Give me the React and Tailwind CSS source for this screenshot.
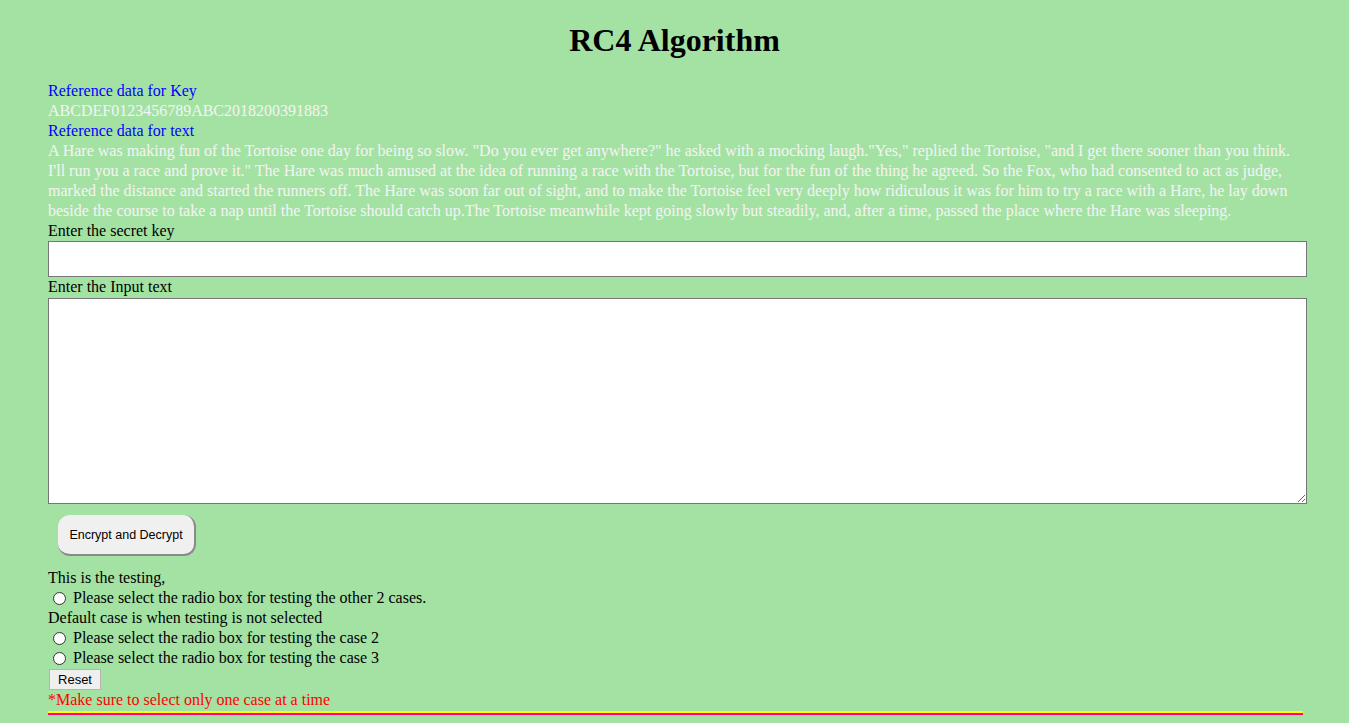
import React from 'react';

const story =
  'A Hare was making fun of the Tortoise one day for being so slow. "Do you ever get anywhere?" he asked with a mocking laugh."Yes," replied the Tortoise, "and I get there sooner than you think. I\'ll run you a race and prove it." The Hare was much amused at the idea of running a race with the Tortoise, but for the fun of the thing he agreed. So the Fox, who had consented to act as judge, marked the distance and started the runners off. The Hare was soon far out of sight, and to make the Tortoise feel very deeply how ridiculous it was for him to try a race with a Hare, he lay down beside the course to take a nap until the Tortoise should catch up.The Tortoise meanwhile kept going slowly but steadily, and, after a time, passed the place where the Hare was sleeping.';

const Radio = ({ label }) => (
  <label className="flex items-center h-[20px]">
    <input
      type="radio"
      className="appearance-none w-[13px] h-[13px] ml-[5px] mr-[7px] rounded-full border border-[#333] bg-white"
    />
    <span>{label}</span>
  </label>
);

const App = () => {
  return (
    <div className="min-h-[723px] bg-[#a4e2a4] font-['Liberation_Serif',serif] text-[16px] leading-[20px] text-black">
      <h1 className="pt-[22px] pb-[22px] text-center text-[32px] leading-[37px] font-bold">RC4 Algorithm</h1>

      <div className="pl-[48px] w-[1307px]">
        {/* Reference data */}
        <div className="text-[#0000ff]">Reference data for Key</div>
        <div className="text-[#f4f4f4]">ABCDEF0123456789ABC2018200391883</div>
        <div className="text-[#0000ff]">Reference data for text</div>
        <p className="text-[#f4f4f4]">{story}</p>

        {/* Inputs */}
        <div>Enter the secret key</div>
        <input type="text" className="block w-full h-[36px] bg-white border border-[#767676] outline-none" />
        <div>Enter the Input text</div>
        <textarea className="block mt-[1px] w-full h-[206px] bg-white border border-[#767676] outline-none resize-y" />

        <button className="mt-[11px] ml-[10px] w-[138px] h-[41px] rounded-[12px] bg-[#f0f0f0] border-r-2 border-b-2 border-[#8a8a8a] font-['Liberation_Sans',sans-serif] text-[12.5px] text-black">
          Encrypt and Decrypt
        </button>

        {/* Testing cases */}
        <div className="mt-[12px]">This is the testing,</div>
        <Radio label="Please select the radio box for testing the other 2 cases." />
        <div>Default case is when testing is not selected</div>
        <Radio label="Please select the radio box for testing the case 2" />
        <Radio label="Please select the radio box for testing the case 3" />
        <button className="block mt-[1px] ml-[1px] w-[52px] h-[21px] bg-[#efefef] border border-[#b4b4b4] font-['Liberation_Sans',sans-serif] text-[13px] leading-[19px] text-black">
          Reset
        </button>
        <div className="text-[#ff0000]">*Make sure to select only one case at a time</div>
        <div className="mt-[1px] w-[1255px] h-[2px] bg-[#ffff00]" />
        <div className="w-[1255px] h-[2px] bg-[#ff0080]" />
      </div>
    </div>
  );
};

export default App;
